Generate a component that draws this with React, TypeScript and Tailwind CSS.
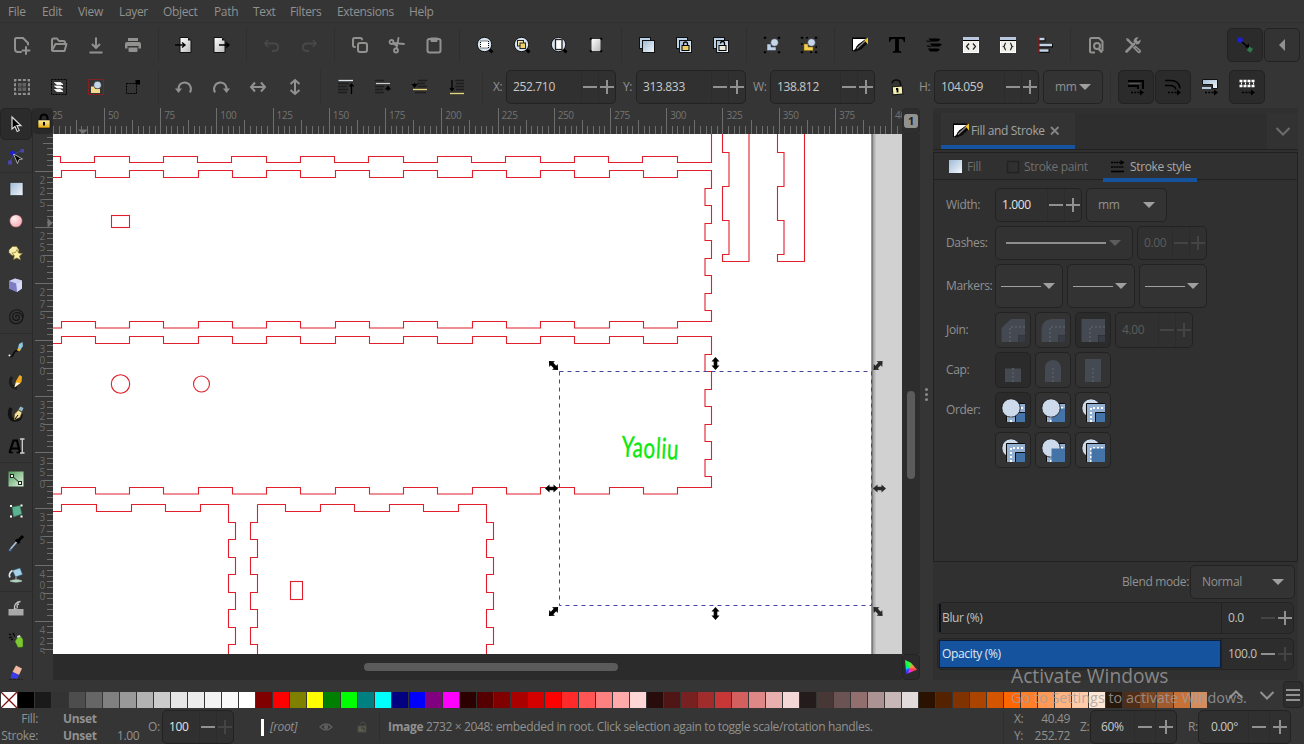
import React from "react";

type Kids = { children?: React.ReactNode };
const G = "#919190";

/* ---------- primitives ---------- */

function Svg({ s = 24, children }: Kids & { s?: number }) {
  return (
    <svg width={s} height={s} viewBox={`0 0 ${s} ${s}`} fill="none" className="shrink-0 overflow-visible">
      {children}
    </svg>
  );
}

function Cell({ children }: Kids) {
  return <div className="flex h-full w-[37px] shrink-0 items-center justify-center">{children}</div>;
}

function Sep() {
  return (
    <div className="flex h-full w-[14px] shrink-0 items-center justify-center">
      <div className="h-[34px] w-px bg-[#2f2f2f]" />
    </div>
  );
}

function Minus({ dim }: { dim?: boolean }) {
  return <div className={`h-[2px] w-[14px] ${dim ? "bg-[#444]" : "bg-[#919190]"}`} />;
}

function Plus({ dim }: { dim?: boolean }) {
  const c = dim ? "#444" : G;
  return (
    <Svg s={14}>
      <path d="M7 0v14M0 7h14" stroke={c} strokeWidth="2" />
    </Svg>
  );
}

function Spin({ value, cls, cell = "w-[17px]", minusDim, plusDim, textCls = "text-[#c9c9c7]" }: {
  value: string; cls: string; cell?: string; minusDim?: boolean; plusDim?: boolean; textCls?: string;
}) {
  return (
    <div className={`flex shrink-0 items-stretch rounded-[5px] border border-[#222] bg-[#303030] ${cls}`}>
      <div className={`flex flex-1 items-center ${textCls}`}>{value}</div>
      <div className={`flex items-center justify-center border-l border-[#2c2c2c] ${cell}`}><Minus dim={minusDim} /></div>
      <div className={`flex items-center justify-center border-l border-[#2c2c2c] ${cell}`}><Plus dim={plusDim} /></div>
    </div>
  );
}

function Tri({ dim }: { dim?: boolean }) {
  return (
    <svg width="12" height="6" viewBox="0 0 12 6" className="shrink-0">
      <path d="M0 0h12L6 6z" fill={dim ? "#5c5c5b" : "#a0a09e"} />
    </svg>
  );
}

function Toggle({ children, on, cls = "h-[35px] w-[36px]" }: Kids & { on?: boolean; cls?: string }) {
  return (
    <div className={`flex shrink-0 items-center justify-center rounded-[5px] border border-[#222] ${on ? "bg-[#2b2b2b]" : "bg-[#333]"} ${cls}`}>
      {children}
    </div>
  );
}

function Grads() {
  return (
    <svg width="0" height="0" className="absolute">
      <defs>
        <linearGradient id="blue" x1="0" y1="0" x2="1" y2="1"><stop offset="0" stopColor="#9fbbd6" /><stop offset="1" stopColor="#f2f7fb" /></linearGradient>
        <linearGradient id="white" x1="0" y1="0" x2="1" y2="1"><stop offset="0" stopColor="#fff" /><stop offset="1" stopColor="#b9b9b9" /></linearGradient>
        <radialGradient id="pink" cx=".35" cy=".3" r=".8"><stop offset="0" stopColor="#fff0f0" /><stop offset="1" stopColor="#f5a5b0" /></radialGradient>
        <linearGradient id="green" x1="0" y1="0" x2="1" y2="1"><stop offset="0" stopColor="#4f9a5c" /><stop offset="1" stopColor="#dff5dc" /></linearGradient>
        <linearGradient id="gold" x1="0" y1="0" x2="0" y2="1"><stop offset="0" stopColor="#fff0a0" /><stop offset="1" stopColor="#e8a90c" /></linearGradient>
        <linearGradient id="shade" x1="0" y1="0" x2="1" y2="0"><stop offset="0" stopColor="#4a4a4a" /><stop offset=".35" stopColor="#a4a4a4" /><stop offset="1" stopColor="#d1d1d1" /></linearGradient>
      </defs>
    </svg>
  );
}

/* ---------- command bar icons ---------- */

const line = { stroke: G, strokeWidth: 2, strokeLinecap: "round" as const, strokeLinejoin: "round" as const };

const IconNew = () => <Svg><path d="M11 19H8a3 3 0 0 1-3-3V6.500a1.500 1.500 0 0 1 1.500-1.500H13l5 5v1.500" {...line} /><path d="M16 14v7M12.500 17.500h7" {...line} /></Svg>;
const IconOpen = () => <Svg><path d="M5 17V7a1.500 1.500 0 0 1 1.500-1.500H10L12 8h4.500A1.500 1.500 0 0 1 18 9.500M5 17.500L8.500 11H19.500l-2 7H6a1 1 0 0 1-1-1z" {...line} /></Svg>;
const IconSave = () => <Svg><path d="M12 4.500v10M8 11l4 4 4-4M5.500 19.500h13" {...line} strokeLinecap="butt" /></Svg>;
const IconPrint = () => (
  <Svg><path d="M7 5h10v3H7zM4 11a2 2 0 0 1 2-2h12a2 2 0 0 1 2 2v4.500h-2.500V13h-11v2.500H4zM7.500 14.500h9V18a1 1 0 0 1-1 1h-7a1 1 0 0 1-1-1z" fill={G} /></Svg>
);
const Page = ({ x }: { x: number }) => (
  <><path d={`M${x} 4.500h8l3 3V19.500h-11z`} fill="url(#white)" stroke="#111" strokeWidth="1" /><path d={`M${x + 8} 4.500v3h3z`} fill="#111" /></>
);
const IconImport = () => <Svg><Page x={8} /><path d="M3 12h9M10 9.500l3 2.500-3 2.500" stroke="#000" strokeWidth="1.400" /></Svg>;
const IconExport = () => <Svg><Page x={5} /><path d="M10 12h9M17 9.500l3 2.500-3 2.500" stroke="#000" strokeWidth="1.400" /></Svg>;
const IconUndo = () => <Svg><path d="M8 7L5 10.500 8 14M5 10.500h10a3.800 3.800 0 0 1 0 7.500h-3" stroke="#484848" strokeWidth="1.800" /></Svg>;
const IconRedo = () => <Svg><path d="M16 7l3 3.500L16 14M19 10.500H9a3.800 3.800 0 0 0 0 7.500h3" stroke="#484848" strokeWidth="1.800" /></Svg>;
const IconCopy = () => <Svg><rect x="10" y="10" width="9" height="9" rx="2" {...line} /><path d="M7 14h-.5A1.500 1.500 0 0 1 5 12.500v-6A1.500 1.500 0 0 1 6.500 5h6A1.500 1.500 0 0 1 14 6.500" {...line} /></Svg>;
const IconCut = () => <Svg><circle cx="6.500" cy="9" r="2" {...line} strokeWidth={1.800} /><circle cx="11" cy="17.500" r="2" {...line} strokeWidth={1.800} /><path d="M8.500 10l10.500 1M11.500 15.500L13.500 5M8 10.500l4 2.500" {...line} strokeWidth={1.800} /></Svg>;
const IconPaste = () => <Svg><rect x="5.500" y="6" width="13" height="13.500" rx="2" {...line} /><path d="M8.500 4.500h7V8a1 1 0 0 1-1 1h-5a1 1 0 0 1-1-1z" fill={G} /></Svg>;

const Lens = ({ children }: Kids) => (
  <Svg><path d="M16 16l3.500 3.500" stroke="#000" strokeWidth="3" /><circle cx="11.500" cy="11.500" r="7.200" fill="#d6e3ef" stroke="#111" />{children}</Svg>
);
const IconZoomSel = () => <Lens><rect x="7.500" y="8" width="8" height="7" fill="#fff" stroke="#000" strokeDasharray="1 1" /></Lens>;
const IconZoomDraw = () => <Lens><rect x="7.500" y="7.500" width="6" height="5.500" fill="#f6e7a8" stroke="#222" /><rect x="10" y="10" width="5.500" height="5.500" fill="#f0d060" stroke="#222" /></Lens>;
const IconZoomPage = () => <Lens><rect x="8.500" y="6.500" width="6.500" height="10" fill="#fff" stroke="#222" strokeWidth="1.300" /></Lens>;
const IconPageWidth = () => (
  <Svg><rect x="7.500" y="6" width="9" height="12" fill="url(#white)" /><path d="M6 5h2v1H7v1H6zM16 5h2v2h-1V6h-1zM6 17h1v1h1v1H6zM17 17h1v2h-2v-1h1z" fill="#0a0a0a" stroke="#0a0a0a" strokeWidth=".5" /></Svg>
);
const IconDup = ({ lock }: { lock?: "closed" | "open" }) => (
  <Svg>
    <rect x="4.500" y="4.500" width="11" height="11" fill="#bcd1e5" stroke="#111" />
    <rect x="7.500" y="7.500" width="12" height="12" fill="url(#blue)" stroke="#111" />
    {lock && <><rect x="10" y="12.500" width="7" height="5" fill={lock === "closed" ? "#f0d060" : "#eceada"} stroke="#000" /><path d={lock === "closed" ? "M11.500 12.500v-1.500a2 2 0 0 1 4 0v1.500" : "M11.500 10.500a2 2 0 0 1 4 0v2"} stroke="#000" strokeWidth="1.300" /></>}
  </Svg>
);
const IconGroup = ({ un }: { un?: boolean }) => (
  <Svg>
    <path d="M4 4h2v1.500H4zM18 4h2v1.500h-2zM4 18.500h2V20H4zM18 18.500h2V20h-2z" fill="#000" stroke="#000" strokeWidth=".5" />
    {un && <path d="M9 4h2v1.500H9zM4 10h1.500v2H4zM18.500 13H20v2h-1.500zM13 18.500h2V20h-2z" fill="#000" />}
    <path d="M7 11h4v3h5v3.500H7z" fill={un ? "#f0cf50" : "#bcd1e5"} stroke={un ? "#806000" : "#334"} strokeWidth=".5" />
    <circle cx="14.500" cy="9.500" r="3.800" fill="#c5d6e8" stroke="#334" strokeWidth=".5" />
  </Svg>
);
const IconFillStroke = () => (
  <Svg>
    <path d="M4 4.500h14L8 18H4z" fill="#000" />
    <path d="M5 6h13L10 11.500 7.500 16 5 17.500z" fill="#fff" />
    <path d="M6 19l2.500-5.500L17 6.500l2.500 4-6.500 6z" fill="#0c0c0c" />
    <path d="M9 15.500l8-7.500" stroke="#8a8a8a" strokeWidth="1.300" />
    <path d="M16.500 7.500l3.500-3v7z" fill="#f0c420" />
  </Svg>
);
const IconText = () => <Svg><path d="M4 4h16v5h-1.200c-.3-2.200-1-3-3-3h-1.900v10.500c0 1.600.5 1.900 2.300 2v1.300H7.800v-1.300c1.800-.1 2.300-.4 2.300-2V6H8.200c-2 0-2.700.8-3 3H4z" fill="#000" /></Svg>;
const IconLayers = () => <Svg><path d="M6.500 5.500h10l2 1-2.500 2H9zM8 10.500h10l2 1-2.500 2H10zM6 15.500h10l2 1-2.500 2H8z" fill="#000" /><path d="M4.500 8l4 .5M5 13l4 .5" stroke="#000" strokeWidth="1.200" /></Svg>;
const IconWin = ({ kind }: { kind: "xml" | "css" }) => (
  <Svg>
    <rect x="4.500" y="4.500" width="15" height="15" fill="#efeee8" stroke="#fff" />
    <path d="M4 5.500h16" stroke="#b9c8e0" strokeWidth="3" /><path d="M4 7.500h16" stroke="#000" />
    {kind === "xml"
      ? <path d="M10 10.500L7.500 13.500l2.500 3M14 10.500l2.500 3-2.500 3" stroke="#222" strokeWidth="1.200" />
      : <path d="M10 10c-1.500 0-1 3-2.300 3.500C9 14 8.500 17 10 17M14 10c1.500 0 1 3 2.300 3.500C15 14 15.500 17 14 17" stroke="#222" strokeWidth="1.200" />}
  </Svg>
);
const IconAlign = () => (
  <Svg><path d="M5 3.500v17" stroke="#8f1414" strokeWidth="1.200" /><path d="M6.500 6.500h6M6.500 12.500h13.500M6.500 18h10" stroke="#0c0c0c" strokeWidth="4" /><path d="M6.500 6h5M6.500 12h12.500M6.500 17.500h9" stroke="#c2d4e6" strokeWidth="2.500" /></Svg>
);
const IconDocProps = () => (
  <Svg><path d="M11 19.500H7.500A1.500 1.500 0 0 1 6 18V6.500A1.500 1.500 0 0 1 7.500 5H15l3.500 3.500V18" stroke={G} strokeWidth="2" /><circle cx="13" cy="13" r="3" stroke={G} strokeWidth="2" /><path d="M14.500 15.500l3.500 4" stroke={G} strokeWidth="2.500" /></Svg>
);
const IconPrefs = () => (
  <Svg><path d="M6.500 17.500L13 11M11 13l-5.500 5.500" stroke={G} strokeWidth="2.600" strokeLinecap="round" /><path d="M12.500 8.500a4 4 0 0 1 5-4l-2 2.500 1.500 1.500 2.500-2a4 4 0 0 1-4 5z" fill={G} /><path d="M5 5l2.500.8 5 5.200-1.500 1.500-5.200-5z" fill={G} /><path d="M14.500 13.500l4.500 4a1.200 1.200 0 0 1-1.500 1.800l-4.500-4.500z" stroke={G} strokeWidth="1.600" /></Svg>
);

/* ---------- tool controls icons ---------- */

const IconSelAll = () => (
  <Svg><rect x="5" y="5" width="14" height="14" stroke={G} strokeWidth="2" strokeDasharray="3 1.670" strokeDashoffset="1.500" /><rect x="8" y="8" width="8" height="8" fill="#626262" /><path d="M12 7v10M7 12h10" stroke="#353535" strokeWidth="1" /></Svg>
);
const IconSelLayers = () => (
  <Svg><rect x="4.500" y="4.500" width="15" height="15" stroke="#000" strokeDasharray="2 1" /><path d="M7.500 7.500h6l2.500 2h-6zM7.500 11h6l2.500 2h-6zM7.500 14.500h6l2.500 2h-6z" fill="#fff" stroke="#fff" strokeWidth=".8" /></Svg>
);
const IconDeselect = () => (
  <Svg><rect x="4.500" y="4.500" width="15" height="15" stroke="#a81818" strokeDasharray="2 1" /><path d="M7 11.500h4v2.500h5v4H7z" fill="#f3d98a" /><circle cx="13.500" cy="10" r="3.800" fill="#c5d6e8" stroke="#222" strokeWidth=".5" /></Svg>
);
const IconTouch = () => <Svg><rect x="5.500" y="8.500" width="10" height="10" stroke="#000" strokeDasharray="2 1" /><rect x="14.500" y="5" width="4.500" height="4.500" fill="#000" /></Svg>;
const IconRotL = () => <Svg><path d="M18 17.500c2.500-5-.5-10-5.500-10-4 0-6.500 3-6 8" stroke={G} strokeWidth="2" /><path d="M3 13.500h7L6.500 18z" fill={G} /></Svg>;
const IconRotR = () => <Svg><path d="M6 17.500c-2.500-5 .5-10 5.500-10 4 0 6.500 3 6 8" stroke={G} strokeWidth="2" /><path d="M14 13.500h7L17.500 18z" fill={G} /></Svg>;
const IconFlipH = () => <Svg><path d="M6 12h12M9 7.500L5 12l4 4.500M15 7.500l4 4.500-4 4.500" stroke={G} strokeWidth="2" /></Svg>;
const IconFlipV = () => <Svg><path d="M12 6v12M7.500 9L12 5l4.500 4M7.500 15l4.500 4 4.500-4" stroke={G} strokeWidth="2" /></Svg>;
const IconRaise = ({ kind }: { kind: "top" | "up" | "down" | "bottom" }) => {
  const dk = { stroke: "#151515", strokeWidth: 1.300, opacity: 0.7 };
  return (
    <Svg>
      {kind === "top" && <><path d="M4 8.500h11M4 11.500h9M4 14.500h10M4 17.500h9" {...dk} /><path d="M4.500 5.500h14.500" stroke="#dfe6ee" strokeWidth="1.300" /><path d="M17.500 19V9.500M15.500 11.500l2-2.500 2 2.500" stroke="#000" strokeWidth="1.300" /></>}
      {kind === "up" && <><path d="M4 5.500h9M4 11.500h9M4 14.500h8M4 17.500h9" {...dk} /><path d="M5 8.500h14" stroke="#c8ced6" strokeWidth="1.200" /><path d="M17 16v-4M15 14l2-2.500 2 2.500z" stroke="#000" strokeWidth="1.200" /></>}
      {kind === "down" && <><path d="M10 5.500h9M9 8.500h8M10 11.500h9M7 17.500h11" {...dk} /><path d="M5 14.500h14" stroke="#e8d878" strokeWidth="1.300" /><path d="M6.500 8v3M4.500 9.500L6.500 12l2-2.500z" stroke="#000" strokeWidth="1.200" /></>}
      {kind === "bottom" && <><path d="M10 5.500h9M11 8.500h8M10 11.500h9M11 14.500h8" {...dk} /><path d="M5 18.500h14" stroke="#e8d878" strokeWidth="1.300" /><path d="M7 5v9.500M5 13l2 2.500L9 13" stroke="#000" strokeWidth="1.300" /></>}
    </Svg>
  );
};
const IconUnlock = () => <Svg><path d="M7 8.500c1-5 8.500-4.500 8.500.5v2.500" stroke="#0a0a0a" strokeWidth="1.500" /><rect x="7.500" y="11.500" width="10" height="8" fill="#f4eeb0" stroke="#111" transform="rotate(-5 12 15)" /><path d="M12.500 13.500v4M11 14h2" stroke="#000" strokeWidth="1.800" /></Svg>;
const DashArrow = () => <><path d="M7 17.500h10" stroke="#000" strokeWidth="1.300" strokeDasharray="2 1.300" /><path d="M16 14.500l4 3-4 3z" fill="#000" /></>;
const IconAffStroke = () => <Svg><path d="M4 6h15v8M4 11h10v3" stroke="#000" strokeWidth="2" /><path d="M5 8.500h11" stroke="#555" /><DashArrow /></Svg>;
const IconAffCorner = () => <Svg><path d="M4 5.500h6q8 0 9 8M4 10.500h5q5 0 6 4" stroke="#000" strokeWidth="1.500" /><DashArrow /></Svg>;
const IconAffGrad = () => <Svg><path d="M4.500 4.500h15v9h-5v-4h-10z" fill="url(#blue)" stroke="#111" /><path d="M5 9.500h9" stroke="#111" /><path d="M4 12h9v2H4z" fill="#b5cadf" /><DashArrow /></Svg>;
const IconAffPat = () => <Svg><path d="M4.500 6h15M4.500 11h15" stroke="#fff" strokeWidth="2.600" strokeDasharray="3 1" /><path d="M6 8.500h13" stroke="#fff" strokeWidth="2" strokeDasharray="1 3" /><DashArrow /></Svg>;

/* ---------- toolbox icons ---------- */

const tools: React.ReactNode[] = [
  <Svg><path d="M8 5v12l3-2.500 2.200 5 2-1-2.200-4.800h4z" fill="#000" stroke="#d8d8d8" strokeWidth="1.200" /></Svg>,
  <Svg><path d="M6 18Q8 10 19 6" stroke="#33489c" /><path d="M4 16.500h4v4H4zM16.500 5h3.500v3.500h-3.500z" fill="#4d44a8" /><circle cx="8.500" cy="9" r="2.300" fill="#1a1af0" /><path d="M9.500 10l9 5-3.500.5-1.500 4z" fill="#000" stroke="#ccc" strokeWidth=".8" /></Svg>,
  <Svg><rect x="6" y="5.500" width="13" height="13" fill="url(#blue)" stroke="#222" strokeWidth=".6" /></Svg>,
  <Svg><circle cx="12" cy="12" r="6.300" fill="url(#pink)" stroke="#5a2a2a" strokeWidth=".5" /></Svg>,
  <Svg><path d="M5 9l3.500-3.500h4L15 9l-1.500 4.500L8 14.500l-3-3z" fill="#f6ecab" stroke="#7a6a20" strokeWidth=".5" /><path d="M13 8.500l1.500 3.500 4 .5-3 2.500 1 4-3.500-2-3.500 1.500.8-4-2.500-2.500 3.700-.5z" fill="#fbf0a6" stroke="#7a6a20" strokeWidth=".6" /></Svg>,
  <Svg><path d="M5 8l6-2.500 7 2v8L13 19l-8-3.500z" fill="#8f8fd6" /><path d="M5 8l6-2.500 7 2-6 3z" fill="#cfcff2" /><path d="M12 10.500l6-3v8L13 19z" fill="#d9d9f8" /><path d="M5 8l7 2.500 1 8.500-8-3.500z" fill="#7d7dc4" /></Svg>,
  <Svg><path d="M12.500 12.500c-1.500-.5-1-2.500.8-2.300 3 .4 2.600 5-.8 5.200-4.500.3-5.500-6.400-.8-7.600 5.500-1.200 9 5 5.500 8.700-3.500 3.500-10 2.500-11.300-2.500C4.800 9 8 4.500 13 4.700c4.500.3 7 4 6.200 7.800" stroke="#141414" strokeWidth="1.100" /></Svg>,
  <Svg><path d="M5 18c6 3 3-7 9-5" stroke="#0a0a0a" strokeWidth="1.500" /><path d="M13.500 12L15 6l3.500-2 .5 4-3 4.500z" fill="#8fc6de" /><path d="M13 12.500l2.500.8 1.300-1.800-2.500-1.300z" fill="#f0b020" /><circle cx="5.500" cy="17.500" r="1" fill="#fff" /></Svg>,
  <Svg><path d="M8 7c-4 6 0 11 5 11" stroke="#0a0a0a" strokeWidth="3" opacity=".6" /><path d="M10.500 17l1.500-6 3.500-6 2.500 1.500-.5 5.500z" fill="#f2a818" /><path d="M10.500 17.500l1.500-5 4.500.5z" fill="#fff3d0" /></Svg>,
  <Svg><path d="M7 6c-3 6-1 12 4 12s6-3 6-6" stroke="#0a0a0a" strokeWidth="3.500" opacity=".8" /><path d="M10 18l.5-6 4-4 3.500 2.500-2 5z" fill="#f3dfa0" stroke="#4a3a10" strokeWidth=".6" /><path d="M11 17l3-4" stroke="#000" /><path d="M14.500 7.500l2-3 3 1.500-1.500 3.500z" fill="#93b8cc" /></Svg>,
  <Svg><path d="M5.500 18.500L9.500 6.500h3.500l3 12M7.500 14.500h7" stroke="#000" strokeWidth="2.200" /><path d="M5 18.500h4M12.500 18.500h3.500" stroke="#000" strokeWidth="1.500" /><path d="M16 5h4.500M16 19h4.500M18.300 5v14" stroke="#cfcfcf" strokeWidth="1.300" /></Svg>,
  <Svg><rect x="4.500" y="4.500" width="15" height="15" fill="url(#green)" /><path d="M8 9l8 7" stroke="#222" /><rect x="6.500" y="7.500" width="3" height="3" fill="#e9ffe9" stroke="#222" /><rect x="14.500" y="14.500" width="3" height="3" fill="#e9ffe9" stroke="#222" /></Svg>,
  <Svg><path d="M8 8l8-1.500 2 8.500-8.500 3z" fill="#5db391" stroke="#2a6a50" strokeWidth=".6" /><path d="M6 6h2v2H6zM16.500 5.500h2v2h-2zM6 16.500h2v2H6zM16.500 16.500h2v2h-2z" fill="#fff" /></Svg>,
  <Svg><path d="M6.500 18l6.500-7.500" stroke="#a9c3dc" strokeWidth="1.700" /><path d="M12 8.500l3.500 3.500M14.500 9.500L19 5" stroke="#000" strokeWidth="3" /><circle cx="6" cy="19" r="1.300" fill="#4a7eb5" /></Svg>,
  <Svg><path d="M8.500 7.500L16 5l2.500 6.500-7 2.500z" fill="#a8d1e8" stroke="#32637d" strokeWidth=".6" /><path d="M8.500 7.500c-3 2-3.500 5-2.500 7" stroke="#d9ecf5" strokeWidth="1.600" /><path d="M12 14v3" stroke="#888" strokeWidth="1.500" /><path d="M6 18c4-1.800 9-1.800 12 0-3 1.500-9 1.500-12 0z" fill="#9fd5b5" stroke="#ddd" strokeWidth=".5" /></Svg>,
  <Svg><path d="M4.500 13h5l2-1 3 1h5v6.500h-15z" fill="#a9a9a9" /><path d="M10.500 13.500c-1-5 2-7.500 6-8M13.500 12c-1-2.500-.5-4 1.500-4" stroke="#c4c4c4" strokeWidth="1.300" /></Svg>,
  <Svg><path d="M13 10l4-1.500 2 3v7.500l-5 .5-3-6z" fill="#7cc832" stroke="#356010" strokeWidth=".5" /><path d="M13 8l3-1 .5 2-3 1z" fill="#ddd" /><path d="M5 6l2 1M9 5l1 2M5 10l3-1M10 8h1M7 12l2-1" stroke="#000" strokeWidth="1.300" /></Svg>,
  <Svg><path d="M12 5.500l6 3-3 6.500-6.500-3z" fill="#f0b9a0" /><path d="M8.500 12l6.500 3-1.500 3.500H7.500L6.500 17z" fill="#3b3bea" /><path d="M5 20h14" stroke="#111" strokeDasharray="3 1" /></Svg>,
];

/* ---------- bars ---------- */

function MenuBar() {
  const items: [string, string][] = [
    ["File", "w-[34px]"], ["Edit", "w-[36px]"], ["View", "w-[41px]"], ["Layer", "w-[44px]"], ["Object", "w-[51px]"],
    ["Path", "w-[39px]"], ["Text", "w-[37px]"], ["Filters", "w-[47px]"], ["Extensions", "w-[72px]"], ["Help", "w-[40px]"],
  ];
  return (
    <div className="flex h-[23px] shrink-0 items-center border-b border-[#303030] pl-[8px] pt-[2px]">
      {items.map(([t, w]) => <span key={t} className={w}>{t}</span>)}
    </div>
  );
}

function CommandBar() {
  const groups = [
    [<IconNew />, <IconOpen />, <IconSave />, <IconPrint />],
    [<IconImport />, <IconExport />],
    [<IconUndo />, <IconRedo />],
    [<IconCopy />, <IconCut />, <IconPaste />],
    [<IconZoomSel />, <IconZoomDraw />, <IconZoomPage />, <IconPageWidth />],
    [<IconDup />, <IconDup lock="closed" />, <IconDup lock="open" />],
    [<IconGroup />, <IconGroup un />],
    [<IconFillStroke />, <IconText />, <IconLayers />, <IconWin kind="xml" />, <IconWin kind="css" />, <IconAlign />],
    [<IconDocProps />, <IconPrefs />],
  ];
  return (
    <div className="flex h-[43px] shrink-0 items-center pl-[3px]">
      {groups.map((g, i) => (
        <React.Fragment key={i}>
          {i > 0 && <Sep />}
          {g.map((ic, j) => <Cell key={j}>{ic}</Cell>)}
        </React.Fragment>
      ))}
      <div className="ml-auto flex gap-[1px] pr-[4px]">
        <Toggle on cls="h-[34px] w-[36px]"><Svg><circle cx="7" cy="7" r="2.800" fill="#1f1fd8" /><path d="M9 9l6 5" stroke="#000" strokeWidth="1.500" /><path d="M16 14.500v-4l-4 4z" fill="#000" /><rect x="14.500" y="14.500" width="4.500" height="4.500" fill="#2f7a4c" transform="rotate(35 17 17)" /></Svg></Toggle>
        <Toggle cls="h-[34px] w-[36px]"><Svg s={12}><path d="M9 0v12L3 6z" fill={G} /></Svg></Toggle>
      </div>
    </div>
  );
}

function ToolControls() {
  return (
    <div className="flex h-[42px] shrink-0 items-center pl-[3px]">
      <Cell><IconSelAll /></Cell><Cell><IconSelLayers /></Cell><Cell><IconDeselect /></Cell><Cell><IconTouch /></Cell>
      <Sep />
      <Cell><IconRotL /></Cell><Cell><IconRotR /></Cell><Cell><IconFlipH /></Cell><Cell><IconFlipV /></Cell>
      <Sep />
      <Cell><IconRaise kind="top" /></Cell><Cell><IconRaise kind="up" /></Cell><Cell><IconRaise kind="down" /></Cell><Cell><IconRaise kind="bottom" /></Cell>
      <Sep />
      <span className="w-[17px] pl-[4px]">X:</span>
      <Spin value="252.710" cls="h-[34px] w-[110px] pl-[6px]" />
      <span className="w-[20px] pl-[7px]">Y:</span>
      <Spin value="313.833" cls="h-[34px] w-[110px] pl-[6px]" />
      <span className="w-[24px] pl-[7px]">W:</span>
      <Spin value="138.812" cls="h-[34px] w-[105px] pl-[6px]" />
      <div className="flex w-[44px] justify-center"><IconUnlock /></div>
      <span className="w-[15px]">H:</span>
      <Spin value="104.059" cls="h-[34px] w-[105px] pl-[6px]" />
      <div className="ml-[4px] flex h-[34px] w-[60px] items-center justify-between rounded-[5px] border border-[#222] bg-[#333] pl-[11px] pr-[11px]">mm<Tri /></div>
      <div className="flex w-[15px] justify-center"><div className="h-[34px] w-px bg-[#2f2f2f]" /></div>
      <Toggle on cls="h-[34px] w-[36px]"><IconAffStroke /></Toggle>
      <Toggle on cls="ml-[1px] h-[34px] w-[36px]"><IconAffCorner /></Toggle>
      <Cell><IconAffGrad /></Cell>
      <Toggle on cls="ml-[1px] h-[34px] w-[36px]"><IconAffPat /></Toggle>
    </div>
  );
}

function Toolbox() {
  return (
    <div className="flex h-full w-[33px] shrink-0 flex-col overflow-hidden border-r border-[#292929]">
      {tools.map((ic, i) => (
        <React.Fragment key={i}>
          {[2, 7, 11, 15].includes(i) && <div className="h-px w-full shrink-0 bg-[#2d2d2d]" />}
          <div className={`flex h-[32px] w-[32px] shrink-0 items-center justify-center ${i === 0 ? "rounded-[5px] border border-[#242424] bg-[#2b2b2b]" : ""}`}>{ic}</div>
        </React.Fragment>
      ))}
    </div>
  );
}

/* ---------- canvas ---------- */

const STEP = 5.623;

function HRuler() {
  const x0 = 104.400 - 53;
  const ticks = [];
  for (let i = -9; i < 142; i++) {
    const x = x0 + i * STEP;
    const y = i % 10 === 0 ? 0 : i % 5 === 0 ? 12 : 18;
    ticks.push(<path key={i} d={`M${Math.floor(x) + 0.5} ${y}V26`} stroke="#6e6e6d" />);
  }
  return (
    <svg width="849" height="26" viewBox="0 0 849 26" className="block shrink-0">
      {ticks}
      {Array.from({ length: 16 }, (_, k) => (
        <text key={k} x={x0 + (k - 1) * 10 * STEP + 3.500} y="11" fontSize="10" letterSpacing="-.4" fill="#737372">{25 + k * 25}</text>
      ))}
      <path d="M25 21.500h10l-5 4.500z" fill="#737372" />
    </svg>
  );
}

function VRuler() {
  const y0 = 171.400 - 134;
  const ticks = [];
  for (let i = -6; i < 87; i++) {
    const y = y0 + i * STEP;
    const x = i % 10 === 0 ? 2 : i % 5 === 0 ? 10 : 14;
    ticks.push(<path key={i} d={`M${x} ${Math.floor(y) + 0.5}H20`} stroke="#6e6e6d" />);
  }
  return (
    <svg width="20" height="520" viewBox="0 0 20 520" className="block shrink-0">
      {ticks}
      {Array.from({ length: 9 }, (_, k) =>
        String(225 + k * 25).split("").map((d, j) => (
          <text key={`${k}-${j}`} x="6.500" y={y0 + k * 10 * STEP + 12.500 + j * 11.300} fontSize="10" fill="#6a6a69">{d}</text>
        ))
      )}
      <path d="M14.500 84v10l5-5z" fill="#737372" />
    </svg>
  );
}

/** Horizontal finger-joint edge that toggles between two levels at each x. */
function joint(start: number, levels: [number, number], xs: number[]) {
  let lv = 0;
  let d = `M${start} ${levels[0]}`;
  xs.forEach((x) => { lv = 1 - lv; d += `H${x}V${levels[lv]}`; });
  return d;
}
const range = (n: number, a: number, p: number) => Array.from({ length: n }, (_, i) => Math.round(a + i * p) + 0.5);

const topEdge = joint(53, [156.500, 162.500], range(19, 60, 34.250)) + "H711.5V134";
const panelTop = joint(53, [177.500, 170.500], range(19, 60.600, 34.250));
const panelBottom = joint(53, [328, 321.500], range(19, 60.600, 34.250));
const panelRight = "H711.5V188.5H705V205.5H711.5V223.5H705V240.5H711.5V258.5H705V275.5H711.5V293.5H705V310.5H711.5V321.5H677";
const sideYs = [522.500, 539.500, 557.500, 574.500, 592.500, 609.500, 627.500, 644.500];
const side = (a: number, b: number) => sideYs.map((y, i) => `V${y}H${i % 2 === 0 ? b : a}`).join("") + "V656";
const strip = (x: number, w: number) => `M${x} 134V152.500H${x + 6.500}V186.500H${x}V220.500H${x + 6.500}V254.500H${x}V261.500H${x + w}V134`;

function Handle({ x, y, r, o = 1 }: { x: number; y: number; r: number; o?: number }) {
  return (
    <path transform={`translate(${x} ${y}) rotate(${r})`} opacity={o} fill="#000" d="M-6.500 0L-2 -4V-1.800H2V-4L6.500 0L2 4V1.800H-2V4Z" />
  );
}

function Drawing() {
  return (
    <svg width="849" height="520" viewBox="53 134 849 520" className="block shrink-0 bg-[#d1d1d1]" fill="none">
      <rect x="53" y="134" width="818.500" height="520" fill="#fff" />
      <rect x="871.500" y="134" width="5" height="520" fill="url(#shade)" />
      <g stroke="#e0202c" strokeWidth="1.100">
        <path d={topEdge} />
        <path d={panelTop + panelRight} /><path d={panelBottom} />
        <g transform="translate(0 166)"><path d={panelTop + panelRight} /><path d={panelBottom} /></g>
        <path d={strip(722.500, 26.500)} /><path d={strip(777.500, 27)} />
        <rect x="111.500" y="215.500" width="18" height="12" /><rect x="290.500" y="581.500" width="12" height="18" />
        <circle cx="120.500" cy="384" r="9.200" /><circle cx="201.500" cy="384" r="8" />
        <path d={"M53 511.500H61.500V504.500H96.500V511.500H131.500V504.500H165.500V511.500H200.500V504.500H228.500" + side(228.500, 235.500)} />
        <path d={"M257.500 504.500" + side(257.500, 250.500)} />
        <path d={"M257.500 504.500H285.500V511.500H320.500V504.500H354.500V511.500H389.500V504.500H423.500V511.500H458.500V504.500H486.500" + side(486.500, 493.500)} />
      </g>
      <text x="0" y="0" transform="translate(621 456.500) rotate(3) scale(.86 1.2)" fontFamily="Lato, sans-serif" fontSize="24" textLength="66" fill="#0be80b" stroke="#0be80b" strokeWidth=".3">Yaoliu</text>
      <rect x="559.500" y="371.500" width="312" height="234" stroke="#45459a" strokeDasharray="4 4" />
      <Handle x={553.500} y={365.500} r={45} /><Handle x={878} y={365.500} r={-45} o={0.800} />
      <Handle x={553.500} y={611.500} r={-45} /><Handle x={878} y={611.500} r={45} o={0.800} />
      <Handle x={715.500} y={363.500} r={90} /><Handle x={715.500} y={613.500} r={90} />
      <Handle x={551.500} y={488.500} r={0} /><Handle x={879.500} y={488.500} r={0} o={0.800} />
    </svg>
  );
}

function CanvasArea() {
  return (
    <div className="flex h-full w-[887px] shrink-0 flex-col">
      <div className="flex h-[26px] shrink-0">
        <div className="flex w-[20px] items-center justify-center rounded-[4px] bg-[#292929] pl-[2px]">
          <Svg s={16}><path d="M4.500 7V5a3.500 3.500 0 0 1 7 0v2" stroke="#000" strokeWidth="2" /><rect x="2" y="7" width="12" height="8" fill="url(#gold)" stroke="#111" strokeWidth=".6" /><path d="M8 9v3.500" stroke="#000" strokeWidth="2" /></Svg>
        </div>
        <HRuler />
        <div className="flex w-[18px] items-center justify-center rounded-[4px] border border-[#2a2a2a] bg-[#2e2e2e]">
          <div className="flex h-[14px] w-[14px] items-center justify-center rounded-[3px] bg-[#919190] text-[11px] font-bold text-[#222]">1</div>
        </div>
      </div>
      <div className="flex h-[520px] shrink-0">
        <VRuler />
        <Drawing />
        <div className="w-[18px] bg-[#2d2d2d] pl-[5px] pt-[257px]"><div className="h-[88px] w-[8px] rounded-full bg-[#5b5b5b]" /></div>
      </div>
      <div className="flex h-[26px] shrink-0 pl-[20px]">
        <div className="w-[849px] bg-[#2b2b2b] pl-[311px] pt-[9px]"><div className="h-[8px] w-[254px] rounded-full bg-[#5b5b5b]" /></div>
        <div className="flex w-[18px] items-center justify-center rounded-[4px] border border-[#242424] bg-[#2b2b2b]">
          <div className="h-[14px] w-[12px] bg-[conic-gradient(from_0deg_at_35%_60%,#3f4_0deg,#f84_70deg,#f35_110deg,#e3f_170deg,#33f_210deg,#0cf_270deg,#0f4_320deg,#3f4_360deg)] [clip-path:polygon(0_0,50%_20%,100%_70%,10%_100%)]" />
        </div>
      </div>
    </div>
  );
}

/* ---------- dock ---------- */

function Row({ label, h, children }: Kids & { label: string; h: string }) {
  return (
    <div className={`flex items-center ${h}`}>
      <span className="w-[49px] shrink-0">{label}</span>
      <div className="flex h-full gap-[4px]">{children}</div>
    </div>
  );
}

function Join({ kind }: { kind: number }) {
  const d = ["M6.500 16L16 7H30V23H23V30H6.500z", "M6.500 30V18Q7 7 18 7H30V23H23V30z", "M6.500 7H30V23H23V30H6.500z"][kind];
  return <Svg s={36}><path d={d} fill="#454951" /><path d="M23.500 23.500h6.500v6.500h-6.500z" fill="#363b44" /><path d="M15 30V15H30" stroke="#5b6068" strokeWidth="1.500" strokeDasharray="2 2" /></Svg>;
}
function Cap({ kind }: { kind: number }) {
  const d = ["M10 16.500H26V30H10z", "M10 30V16a8 8 0 0 1 16 0V30z", "M10 7H26V30H10z"][kind];
  return <Svg s={36}><path d={d} fill="#454951" /><path d="M18 30V16" stroke="#5b6068" strokeWidth="1.500" strokeDasharray="2 2" /></Svg>;
}
function Order({ seq }: { seq: string }) {
  const big = seq.indexOf("f") > seq.indexOf("s");
  const parts: Record<string, React.ReactNode> = {
    f: <path key="f" d={big ? "M16.500 16.500H30V30H16.500z" : "M20 20H30V30H20z"} fill="#4473a8" />,
    s: <g key="s"><path d="M11.500 30V11.500H30V20.500H20.500V30z" fill="#93b0d2" /><path d="M11.500 30V11.500H30M20.500 30V20.500H30" stroke="#0c0c0c" /><path d="M16 30V16H30" stroke="#fff" strokeWidth="2" strokeDasharray="2 2" /></g>,
    m: <circle key="m" cx="16" cy="16" r="9.200" fill="#cddaec" stroke="#111" strokeWidth=".8" />,
  };
  return <Svg s={36}>{seq.split("").map((k) => parts[k])}</Svg>;
}

function Dock() {
  const btn = "h-[36px] w-[36px]";
  return (
    <div className="flex w-[365px] shrink-0 flex-col bg-[#303030]">
      <div className="mt-[5px] flex h-[37px] shrink-0 border-b border-[#212121] bg-[#2e2e2e] pl-[8px]">
        <div className="flex w-[134px] items-center border-b-[4px] border-[#15539e] bg-[#333] pl-[8px] pt-[3px] text-[#a3a3a2]">
          <Svg><IconFillStroke /></Svg>
          <span className="-ml-[2px]">Fill and Stroke</span>
          <Svg s={20}><path d="M6 6l7.500 7.500M13.500 6L6 13.500" stroke="#858584" strokeWidth="1.800" /></Svg>
        </div>
        <div className="ml-auto flex w-[31px] items-center justify-center bg-[#323232]"><Svg s={16}><path d="M1.500 5L8 11.500 14.500 5" stroke="#6d6d6c" strokeWidth="2" /></Svg></div>
      </div>
      <div className="mt-[2px] flex h-[410px] shrink-0 flex-col border border-[#212121]">
        <div className="flex h-[27px] shrink-0 border-b border-[#222] text-[#6f6f6e]">
          <div className="flex w-[69px] items-center pl-[15px] pt-[2px]"><Svg s={14}><rect width="13" height="13" fill="url(#blue)" /></Svg><span className="ml-[4px]">Fill</span></div>
          <div className="flex w-[100px] items-center pl-[3px] pt-[2px]"><Svg s={14}><rect x="1.500" y="1.500" width="11" height="11" stroke="#222" strokeWidth="1.500" /></Svg><span className="ml-[4px]">Stroke paint</span></div>
          <div className="relative flex h-[29px] w-[94px] items-center border-b-[4px] border-[#15539e] pl-[8px] pt-[3px] text-[#a8a8a7]">
            <Svg s={14}><path d="M0 2.500h11M0 7h13" stroke="#000" strokeWidth="1.300" strokeDasharray="2 .6" /><path d="M0 11.500h13" stroke="#000" strokeWidth="1.600" /><path d="M9.500 0l4 2.500-4 2.500z" fill="#000" /></Svg>
            <span className="ml-[5px]">Stroke style</span>
          </div>
        </div>
        <div className="mt-[8px] flex flex-col gap-[4px] pl-[12px]">
          <Row label="Width:" h="h-[34px]">
            <Spin value="1.000" cls="w-[87px] pl-[6px]" textCls="text-[#e4e4e2]" />
            <div className="flex w-[81px] items-center justify-between rounded-[5px] border border-[#222] bg-[#333] pl-[11px] pr-[11px]">mm<Tri /></div>
          </Row>
          <Row label="Dashes:" h="h-[34px]">
            <div className="flex w-[138px] items-center rounded-[5px] border border-[#222] bg-[#323232] pl-[10px]"><div className="mr-[3px] h-[2px] w-[100px] bg-[#8d8d8c]" /><Tri dim /></div>
            <Spin value="0.00" cls="w-[70px] pl-[6px]" minusDim plusDim textCls="text-[#5c5c5b]" />
          </Row>
          <Row label="Markers:" h="h-[44px]">
            {[0, 1, 2].map((i) => (
              <div key={i} className="flex w-[68px] items-center rounded-[5px] border border-[#222] bg-[#333] pl-[5px]"><div className="mr-[2px] h-px w-[40px] bg-[#a0a09e]" /><Tri /></div>
            ))}
          </Row>
          <Row label="Join:" h="h-[36px]">
            <Toggle cls={btn}><Join kind={0} /></Toggle><Toggle cls={btn}><Join kind={1} /></Toggle><Toggle on cls={btn}><Join kind={2} /></Toggle>
            <Spin value="4.00" cls="w-[78px] pl-[6px]" minusDim plusDim textCls="text-[#5c5c5b]" />
          </Row>
          <Row label="Cap:" h="h-[36px]">
            <Toggle on cls={btn}><Cap kind={0} /></Toggle><Toggle cls={btn}><Cap kind={1} /></Toggle><Toggle cls={btn}><Cap kind={2} /></Toggle>
          </Row>
          <Row label="Order:" h="h-[36px]">
            <Toggle on cls={btn}><Order seq="fsm" /></Toggle><Toggle cls={btn}><Order seq="sfm" /></Toggle><Toggle cls={btn}><Order seq="mfs" /></Toggle>
          </Row>
          <Row label="" h="h-[36px]">
            <Toggle cls={btn}><Order seq="mfs" /></Toggle><Toggle cls={btn}><Order seq="smf" /></Toggle><Toggle cls={btn}><Order seq="msf" /></Toggle>
          </Row>
        </div>
      </div>
      <div className="mt-[3px] flex h-[34px] shrink-0 items-center justify-end pr-[3px]">
        Blend mode:
        <div className="ml-[1px] flex h-full w-[105px] items-center justify-between rounded-[5px] border border-[#222] bg-[#333] pl-[11px] pr-[10px]">Normal<Tri /></div>
      </div>
      {[
        { t: "Blur (%)", v: "0.0", on: false },
        { t: "Opacity (%)", v: "100.0", on: true },
      ].map((r) => (
        <div key={r.t} className={`${r.on ? "mt-[4px]" : "mt-[3px]"} ml-[4px] flex h-[32px] w-[357px] shrink-0 items-center rounded-[5px] border border-[#232323] bg-[#2d2d2d]`}>
          <div className={`ml-[1px] flex h-[28px] w-[282px] items-center ${r.on ? "border border-[#0b1f3a] bg-[#15539e] pl-[2px] text-[#e2e8f0]" : "border-l-2 border-[#0a0f18] pl-[1px] text-[#c0c0be]"}`}>{r.t}</div>
          <div className="flex h-full w-[38px] items-center border-l border-[#222] pl-[6px] text-[#c0c0be]">{r.v}</div>
          <div className="flex w-[17px] justify-center"><Minus dim={!r.on} /></div>
          <div className="flex w-[17px] justify-center"><Plus dim={r.on} /></div>
        </div>
      ))}
    </div>
  );
}

/* ---------- palette & status ---------- */

const swatches =
  "000000 1a1a1a 333333 4d4d4d 666666 808080 999999 b3b3b3 cccccc e6e6e6 ececec f2f2f2 f9f9f9 ffffff 800000 ff0000 808000 ffff00 008000 00ff00 008080 00ffff 000080 0000ff 800080 ff00ff 2b0000 550000 800000 aa0000 d40000 ff0000 ff2a2a ff5555 ff8080 ffaaaa ffd5d5 280b0b 501616 782121 a02c2c c83737 d35f5f de8787 e9afaf f4d7d7 241c1c 483737 6c5353 916f6f ac9393 c8b7b7 e3dbdb 2b1100 552200 803300 aa4400 d45500 ff6600 ff7f2a ff9955 ffb380 ffccaa ffe6d5 28170b 502d16 784421 a05a2c c87137 d38d5f".split(" ");

function Palette() {
  return (
    <div className="flex h-[30px] shrink-0 pl-px">
      <div className="flex gap-px pt-[12px]">
        <svg width="16" height="16" viewBox="0 0 16 16" className="bg-white"><path d="M0 0L16 16M16 0L0 16" stroke="#7a1414" strokeWidth="1.300" /></svg>
        {swatches.map((c, i) => <div key={i} className="h-[16px] w-[16px]" style={{ backgroundColor: `#${c}` }} />)}
      </div>
      <div className="ml-[21px] flex pt-[7px]">
        <Svg s={16}><path d="M1.500 11L8 4.500 14.500 11" stroke={G} strokeWidth="2" /></Svg>
        <div className="w-[15px]" />
        <Svg s={16}><path d="M1.500 5L8 11.500 14.500 5" stroke={G} strokeWidth="2" /></Svg>
      </div>
      <div className="ml-[8px] mt-[1px] flex h-[27px] w-[20px] items-center justify-center rounded-[4px] border border-[#242424] bg-[#2e2e2e]">
        <Svg s={14}><path d="M0 2h14M0 7h14M0 12h14" stroke={G} strokeWidth="2" /></Svg>
      </div>
    </div>
  );
}

function StatusBar() {
  return (
    <div className="flex h-[34px] shrink-0 items-center">
      <div className="flex w-[38px] flex-col items-end leading-[17px]"><span>Fill:</span><span className="-ml-4">Stroke:</span></div>
      <div className="flex w-[110px] flex-col pl-[25px] leading-[17px]">
        <b>Unset</b>
        <div className="flex"><b className="w-[54px]">Unset</b><span>1.00</span></div>
      </div>
      <span className="w-[14px]">O:</span>
      <Spin value="100" cls="h-[34px] w-[72px] pl-[6px]" plusDim textCls="text-[#e4e4e2]" />
      <div className="ml-[27px] h-[17px] w-[3px] bg-white" />
      <i className="ml-[6px] w-[48px]">[root]</i>
      <Svg s={16}><path d="M2 8q6-6 12 0-6 6-12 0z" stroke="#5e5e5d" strokeWidth="1.300" /><circle cx="8" cy="8" r="2.200" fill="#5e5e5d" /></Svg>
      <div className="w-[20px]" />
      <Svg s={16}><rect x="4" y="7" width="8" height="6" fill="#5c5a4e" stroke="#4a4a44" /><path d="M6.500 5.500a2.500 2.500 0 0 1 5 0v2" stroke="#4a4a48" /><path d="M7 9h3v2.500" stroke="#333" /></Svg>
      <div className="ml-[9px] h-[30px] w-px bg-[#2f2f2f]" />
      <div className="ml-[8px] w-[615px] whitespace-nowrap"><b>Image</b> 2732 × 2048: embedded in root. Click selection again to toggle scale/rotation handles.</div>
      <div className="h-[34px] w-px bg-[#2f2f2f]" />
      <div className="flex w-[66px] flex-col pl-[10px] leading-[17px]">
        <div className="flex justify-between"><span>X:</span><span>40.49</span></div>
        <div className="flex justify-between"><span>Y:</span><span>252.72</span></div>
      </div>
      <span className="w-[20px] pl-[10px]">Z:</span>
      <Spin value="60%" cls="h-[34px] w-[87px] pl-[10px]" cell="w-[21px]" textCls="text-[#c9c9c7]" />
      <span className="w-[21px] pl-[11px]">R:</span>
      <Spin value="0.00°" cls="h-[34px] w-[93px] pl-[12px]" cell="w-[21px]" textCls="text-[#c9c9c7]" />
    </div>
  );
}

export default function App() {
  return (
    <div className="relative flex h-[744px] w-[1304px] flex-col overflow-hidden bg-[#353535] font-['Open_Sans','Noto_Sans',sans-serif] text-[12px] leading-[16px] tracking-[-0.345px] text-[#919190]">
      <Grads />
      <MenuBar />
      <CommandBar />
      <ToolControls />
      <div className="flex h-[572px] shrink-0">
        <Toolbox />
        <CanvasArea />
        <div className="flex w-[13px] shrink-0 flex-col items-center gap-[2px] pt-[280px]">
          {[0, 1, 2].map((i) => <div key={i} className="h-[3px] w-[3px] rounded-full bg-[#8a8a89]" />)}
        </div>
        <Dock />
      </div>
      <Palette />
      <StatusBar />
      <div className="absolute left-[1011px] top-[663px] whitespace-nowrap tracking-[0px] text-[#a0a0a0]/80">
        <div className="text-[19.2px] leading-[25px]">Activate Windows</div>
        <div className="text-[14.4px] leading-[20px]">Go to Settings to activate Windows.</div>
      </div>
    </div>
  );
}
